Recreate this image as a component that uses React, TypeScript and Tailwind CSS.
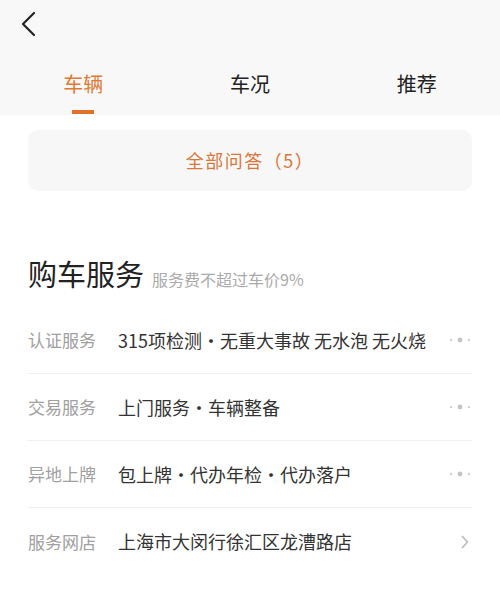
import React from "react";

const Dots = () => (
  <svg width="24" height="8" viewBox="0 0 24 8" className="shrink-0">
    <circle cx="3" cy="4" r="1.2" fill="#d0d0d0" />
    <circle cx="12" cy="4" r="2.4" fill="#c4c4c4" />
    <circle cx="21" cy="4" r="1.2" fill="#d0d0d0" />
  </svg>
);

const Chevron = () => (
  <svg width="10" height="14" viewBox="0 0 10 14" className="shrink-0">
    <path d="M2.5 1.5 L7.5 7 L2.5 12.5" fill="none" stroke="#bdbdbd" strokeWidth="1.8" strokeLinecap="round" strokeLinejoin="round" />
  </svg>
);

const Sep = () => <span className="inline-block w-[18px] text-center">·</span>;

const rows: { label: string; value: React.ReactNode; icon: string }[] = [
  {
    label: "认证服务",
    value: (
      <>
        315项检测<Sep />无重大事故 无水泡 无火烧
      </>
    ),
    icon: "dots",
  },
  {
    label: "交易服务",
    value: (
      <>
        上门服务<Sep />车辆整备
      </>
    ),
    icon: "dots",
  },
  {
    label: "异地上牌",
    value: (
      <>
        包上牌<Sep />代办年检<Sep />代办落户
      </>
    ),
    icon: "dots",
  },
  { label: "服务网店", value: "上海市大闵行徐汇区龙漕路店", icon: "chevron" },
];

export default function App() {
  return (
    <div
      className="w-[500px] h-[590px] bg-white overflow-hidden"
      style={{ fontFamily: '"Noto Sans CJK SC", "Noto Sans", sans-serif' }}
    >
      <div className="h-[115px] bg-[#f8f8f8] flex flex-col">
        <div className="h-[48px] pl-[20px] pt-[11px]">
          <svg width="18" height="26" viewBox="0 0 18 26">
            <path d="M14 2 L3 13 L14 24" fill="none" stroke="#222" strokeWidth="2.2" strokeLinecap="round" strokeLinejoin="round" />
          </svg>
        </div>
        <div className="grid grid-cols-3 pt-[22px]">
          <div className="flex flex-col items-center">
            <span className="text-[20px] leading-[28px] text-[#e07a33]">车辆</span>
            <div className="mt-[12px] w-[22px] h-[4px] bg-[#e0722a]" />
          </div>
          <div className="flex flex-col items-center">
            <span className="text-[20px] leading-[28px] text-[#222]">车况</span>
          </div>
          <div className="flex flex-col items-center">
            <span className="text-[20px] leading-[28px] text-[#222]">推荐</span>
          </div>
        </div>
      </div>

      <div className="mx-[28px] mt-[15px] h-[61px] rounded-[10px] bg-[#f7f7f7] flex items-center justify-center">
        <span className="text-[18px] text-[#d9773a] tracking-[1.5px]">全部问答（5）</span>
      </div>

      <div className="mx-[28px] mt-[62px] flex items-baseline">
        <span className="text-[29px] leading-[40px] text-[#222]">购车服务</span>
        <span className="ml-[8px] text-[16px] text-[#aaaaaa]">服务费不超过车价9%</span>
      </div>

      <div className="mx-[28px] mt-[14px] flex flex-col">
        {rows.map((r, i) => (
          <div
            key={r.label}
            className={
              "h-[67px] flex items-center " +
              (i < rows.length - 1 ? "border-b border-[#efefef]" : "")
            }
          >
            <span className="w-[90px] shrink-0 text-[17px] text-[#a0a0a0]">{r.label}</span>
            <span className="flex-1 text-[18px] text-[#333] whitespace-nowrap">{r.value}</span>
            {r.icon === "dots" ? <Dots /> : <div className="pr-[2px]"><Chevron /></div>}
          </div>
        ))}
      </div>
    </div>
  );
}
